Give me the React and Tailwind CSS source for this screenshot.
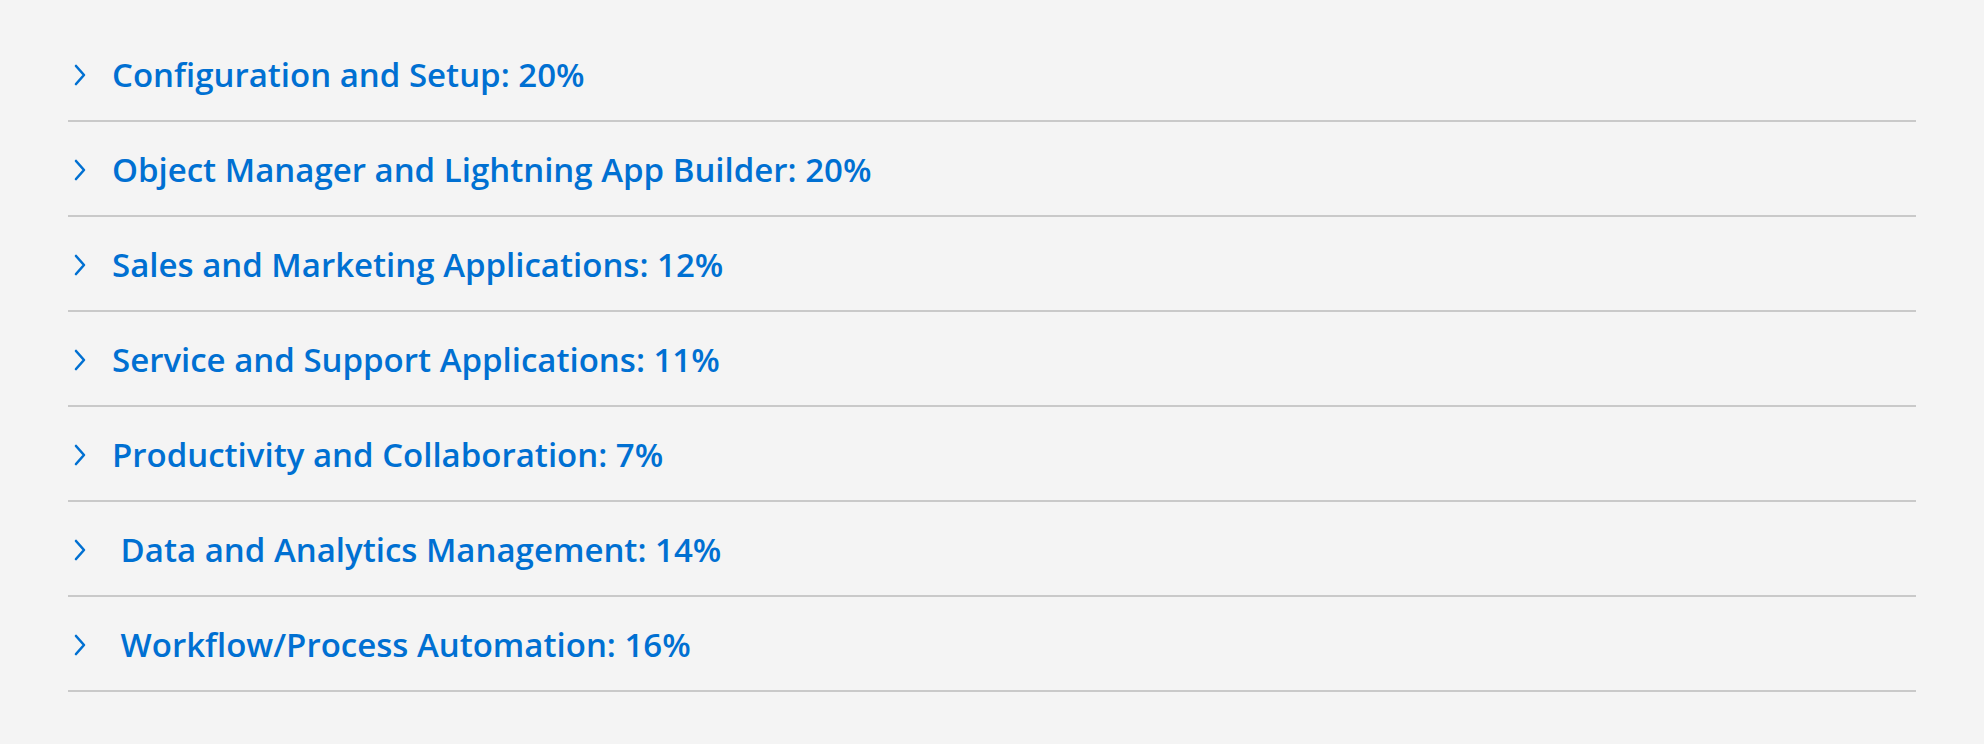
const sections = [
  'Configuration and Setup: 20%',
  'Object Manager and Lightning App Builder: 20%',
  'Sales and Marketing Applications: 12%',
  'Service and Support Applications: 11%',
  'Productivity and Collaboration: 7%',
  '\u00a0Data and Analytics Management: 14%',
  '\u00a0Workflow/Process Automation: 16%',
];

function Chevron() {
  return (
    <svg width="14" height="22" viewBox="0 0 14 22" className="shrink-0">
      <polyline points="3,2 11,11 3,20" fill="none" stroke="#0070d2" strokeWidth="2.6" strokeLinecap="round" strokeLinejoin="round" />
    </svg>
  );
}

export default function App() {
  return (
    <div className="min-h-[744px] w-full bg-[#f4f4f4] pl-[68px] pr-[68px] pt-[27px]" style={{ fontFamily: '"Open Sans", "Noto Sans", sans-serif' }}>
      {sections.map((title) => (
        <div key={title} className="flex h-[95px] items-center border-b-2 border-[#c9c9c9] pt-[2px]">
          <div className="flex w-[44px] justify-start pl-[5px]">
            <Chevron />
          </div>
          <span className="whitespace-pre text-[33px] font-semibold text-[#0070d2]">{title}</span>
        </div>
      ))}
    </div>
  );
}
